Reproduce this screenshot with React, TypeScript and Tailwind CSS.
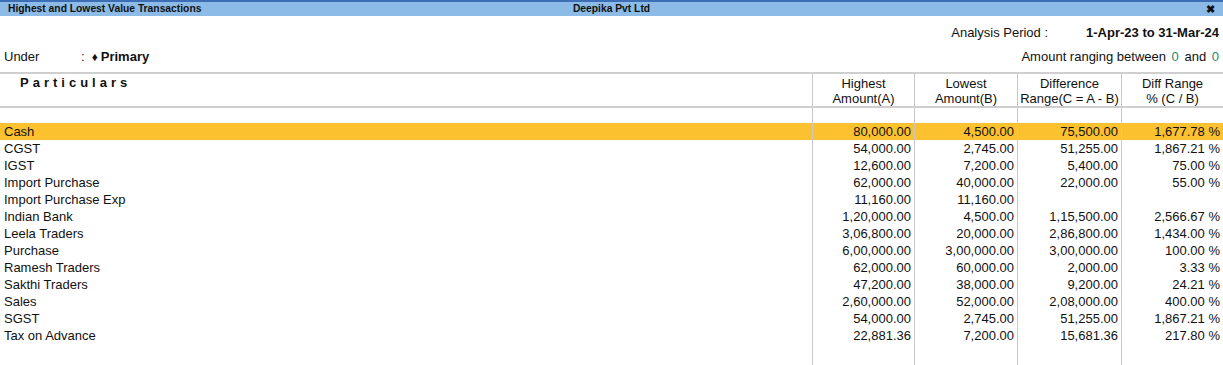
const rows: [string, string, string, string, string][] = [
  ["Cash", "80,000.00", "4,500.00", "75,500.00", "1,677.78 %"],
  ["CGST", "54,000.00", "2,745.00", "51,255.00", "1,867.21 %"],
  ["IGST", "12,600.00", "7,200.00", "5,400.00", "75.00 %"],
  ["Import Purchase", "62,000.00", "40,000.00", "22,000.00", "55.00 %"],
  ["Import Purchase Exp", "11,160.00", "11,160.00", "", ""],
  ["Indian Bank", "1,20,000.00", "4,500.00", "1,15,500.00", "2,566.67 %"],
  ["Leela Traders", "3,06,800.00", "20,000.00", "2,86,800.00", "1,434.00 %"],
  ["Purchase", "6,00,000.00", "3,00,000.00", "3,00,000.00", "100.00 %"],
  ["Ramesh Traders", "62,000.00", "60,000.00", "2,000.00", "3.33 %"],
  ["Sakthi Traders", "47,200.00", "38,000.00", "9,200.00", "24.21 %"],
  ["Sales", "2,60,000.00", "52,000.00", "2,08,000.00", "400.00 %"],
  ["SGST", "54,000.00", "2,745.00", "51,255.00", "1,867.21 %"],
  ["Tax on Advance", "22,881.36", "7,200.00", "15,681.36", "217.80 %"],
];

const cols = "grid grid-cols-[812px_102px_103px_104px_102px]";
const cell = "border-l border-[#c8c8c8]";

function Cells({ h }: { h: string }) {
  return (
    <div className={`${cols} ${h}`}>
      <div />
      <div className={cell} />
      <div className={cell} />
      <div className={cell} />
      <div className={cell} />
    </div>
  );
}

export default function App() {
  return (
    <div className="h-[365px] w-[1223px] flex flex-col bg-white text-[13px] text-[#111] font-['Liberation_Sans',Arial,sans-serif] overflow-hidden">
      <div className="h-[2px] bg-[#3c6db5]" />
      <div className="h-[14px] bg-[#8bbbe6] grid grid-cols-[1fr_auto_1fr] items-center px-2 text-[10.3px] font-bold leading-none">
        <span>Highest and Lowest Value Transactions</span>
        <span>Deepika Pvt Ltd</span>
        <span className="text-right text-[11px]">✖</span>
      </div>

      <div className="h-[56px] flex flex-col">
        <div className="mt-[9px] h-[16px] flex items-center justify-end pr-[4px]">
          <span>Analysis Period :</span>
          <span className="ml-[38px] font-bold">1-Apr-23 to 31-Mar-24</span>
        </div>
        <div className="mt-[8px] h-[16px] flex items-center justify-between pl-[4px] pr-[4px]">
          <div className="flex items-center">
            <span className="w-[77px]">Under</span>
            <span>:</span>
            <span className="ml-[7px] text-[12px]">♦</span>
            <span className="ml-[3px] font-bold">Primary</span>
          </div>
          <div>
            Amount ranging between <span className="text-[#1b8a6b] mx-[2px]">0</span> and{" "}
            <span className="text-[#1b8a6b] ml-[2px]">0</span>
          </div>
        </div>
      </div>

      <div className="h-[2px] bg-[#cfcfcf]" />
      <div className={`${cols} h-[32px] leading-[15px]`}>
        <div className="pl-[20px] pt-[1px] font-bold tracking-[4px]">Particulars</div>
        <div className={`${cell} text-center pt-[2px]`}>Highest<br />Amount(A)</div>
        <div className={`${cell} text-center pt-[2px]`}>Lowest<br />Amount(B)</div>
        <div className={`${cell} text-center pt-[2px]`}>Difference<br />Range(C = A - B)</div>
        <div className={`${cell} text-center pt-[2px]`}>Diff Range<br />% (C / B)</div>
      </div>
      <div className="h-[2px] bg-[#cfcfcf]" />

      <Cells h="h-[15px]" />
      {rows.map((r, i) => (
        <div key={r[0]} className={`${cols} h-[17px] leading-[17px] ${i === 0 ? "bg-[#fcc12f]" : ""}`}>
          <div className="pl-[4px]">{r[0]}</div>
          {r.slice(1).map((v, j) => (
            <div key={j} className={`${cell} text-right pr-[3px]`}>{v}</div>
          ))}
        </div>
      ))}
      <Cells h="flex-1" />
    </div>
  );
}
